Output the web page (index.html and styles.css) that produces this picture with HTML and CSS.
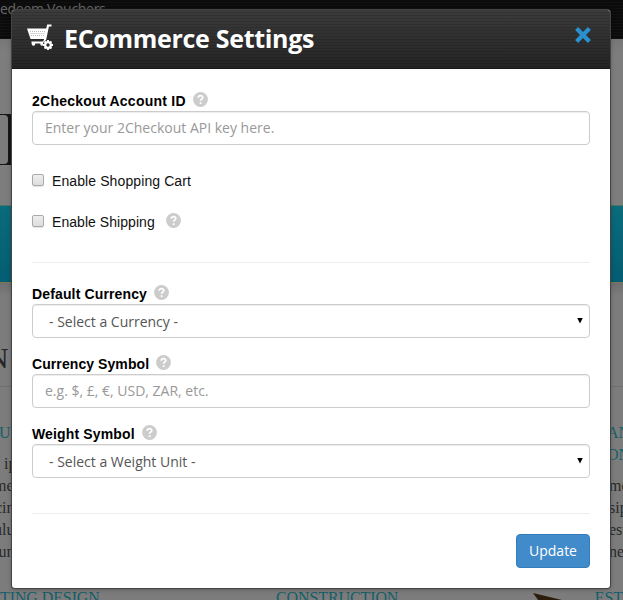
FILE: index.html
```html
<!DOCTYPE html>
<html lang="en">
<head>
<meta charset="utf-8">
<title>ECommerce Settings</title>
<link rel="stylesheet" href="styles.css">
</head>
<body>
<svg class="defs" aria-hidden="true"><symbol id="help" viewBox="0 0 15 15"><circle cx="7.5" cy="7.5" r="7.4" fill="#ccc"/><path d="M5.2 5.8C5.2 2.8 9.9 3 9.7 5.7C9.6 7.1 7.6 7.2 7.6 8.7M7.6 10.2V12" fill="none" stroke="#fff" stroke-width="1.8"/></symbol></svg>
<div class="page">
  <div class="topbar">edeem Vouchers</div>
  <div class="hero"><div class="logo"><div class="logo-inner"></div></div></div>
  <div class="banner"></div>
  <div class="shade"></div>
  <div class="heading">N</div>
  <div class="columns">
    <div class="side left">
      <h3>U</h3>
      <p class="lines"><span>&nbsp;ip</span><span>me</span><span>cin</span><span>ulu</span><span>lun</span></p>
    </div>
    <div class="side right">
      <h3>AN<br>ON</h3>
      <p class="lines"><span>me</span><span>sip</span><span>est</span><span>ne</span></p>
    </div>
  </div>
  <div class="titles">
    <span>TING DESIGN</span><span>CONSTRUCTION</span>
    <svg width="30" height="12" viewBox="0 0 30 12"><path d="M0 1L29 8L24 12H8Z" fill="#2c1d0c"/></svg>
    <span>EST</span>
  </div>
</div>
<div class="modal" role="dialog">
  <header class="modal-header">
    <svg class="cart" width="27" height="27" viewBox="0 0 27 27" fill="none" stroke="#fff">
      <path d="M0 4.5H21L18.5 15H3.5Z" fill="#fff" stroke="none"/>
      <path d="M3 7.5H18M3.5 9.5H18M4 11.5H17" stroke="#888" stroke-width=".6" stroke-dasharray="1 1"/>
      <path d="M24.5 1.5H21L18 16L17 18.5H4.5" stroke-width="2.2"/>
      <circle cx="6.5" cy="20" r="1.8" fill="#fff" stroke="none"/><circle cx="15" cy="20" r="1.8" fill="#fff" stroke="none"/>
      <circle cx="21" cy="21" r="5.2" fill="#2c2c2c" stroke="none"/>
      <circle cx="21" cy="21" r="2.8" stroke-width="2.2"/>
      <path d="M21 16V18M21 24V26M16 21H18M24 21H26M17.5 17.5L18.9 18.9M23.1 23.1L24.5 24.5M24.5 17.5L23.1 18.9M18.9 23.1L17.5 24.5" stroke-width="1.9"/>
    </svg>
    <h1>ECommerce Settings</h1>
    <svg class="close" width="16" height="16" viewBox="0 0 16 16"><path d="M1.6 1.6L14.4 14.4M14.4 1.6L1.6 14.4" stroke="#2a91d0" stroke-width="4.2"/></svg>
  </header>
  <form class="modal-body">
    <div class="field">
      <div class="label"><span class="l1">2Checkout Account ID</span><svg><use href="#help"/></svg></div>
      <input class="control" type="text" placeholder="Enter your 2Checkout API key here.">
    </div>
    <label class="check first"><i class="box"></i><span>Enable Shopping Cart</span></label>
    <label class="check second"><i class="box"></i><span>Enable Shipping</span><svg><use href="#help"/></svg></label>
    <hr>
    <div class="field">
      <div class="label"><span class="l2">Default Currency</span><svg><use href="#help"/></svg></div>
      <div class="control select"><span>- Select a Currency -</span><i class="arrow"></i></div>
    </div>
    <div class="field">
      <div class="label"><span class="l3">Currency Symbol</span><svg><use href="#help"/></svg></div>
      <input class="control" type="text" placeholder="e.g. $, £, €, USD, ZAR, etc.">
    </div>
    <div class="field">
      <div class="label"><span class="l4">Weight Symbol</span><svg><use href="#help"/></svg></div>
      <div class="control select"><span>- Select a Weight Unit -</span><i class="arrow"></i></div>
    </div>
    <hr class="end">
    <footer><button type="button">Update</button></footer>
  </form>
</div>
</body>
</html>
```
FILE: styles.css
```css
* { box-sizing: border-box; }
body { margin: 0; width: 623px; height: 600px; overflow: hidden; position: relative; font-family: "Open Sans", sans-serif; }
h1, h3, p { margin: 0; font-weight: normal; }
.defs { display: none; }

/* dimmed page behind the dialog */
.page { height: 600px; overflow: hidden; background: #7c7c7c; font-family: "Liberation Serif", serif; }
.topbar { height: 39px; background: repeating-linear-gradient(#0b0b0b 0 2px, #111 2px 3px); color: #666; font: 14px/18px "Open Sans", sans-serif; letter-spacing: -.3px; }
.hero { height: 166px; padding-top: 75px; background: linear-gradient(#777, #7d7d7d 12px); }
.logo { width: 12px; height: 51px; padding-top: 1px; background: #171717; }
.logo-inner { width: 8px; height: 49px; border-radius: 0 4px 4px 0; background: #7c7c7c; }
.banner { height: 78px; background: linear-gradient(#0a6b7b, #045d72); border-top: 1px solid #4b7767; border-bottom: 1px solid #777a50; }
.shade { height: 13px; background: linear-gradient(#6f6f6f, #7c7c7c); }
.heading { height: 91px; padding-top: 44px; border-bottom: 1px solid #707070; color: #262626; font-size: 30px; line-height: 36px; text-indent: -13px; }
.columns { display: flex; justify-content: space-between; height: 201px; padding-top: 35px; }
.side { width: 13px; white-space: nowrap; color: #292929; }
.side h3 { color: #145f6a; font-size: 16px; line-height: 22px; }
.left h3 { text-indent: -1px; }
.lines span { display: block; font-size: 16px; line-height: 22px; }
.left .lines { padding-top: 9px; }
.left .lines span:nth-child(2) { margin-left: -6px; }
.left .lines span:nth-child(3) { margin-left: -5px; }
.left .lines span:nth-child(4) { margin-left: -6px; }
.left .lines span:nth-child(5) { margin-left: -6px; }
.right { width: 14px; }
.right h3 { margin-left: -2px; }
.right .lines { padding-top: 9px; }
.titles { display: flex; height: 20px; color: #145f6a; font-size: 16px; line-height: 20px; letter-spacing: -.1px; white-space: nowrap; }
.titles span:nth-child(1) { width: 277px; }
.titles span:nth-child(2) { width: 258px; }
.titles svg { margin: 4px 32px 0 0; }

.modal { position: absolute; left: 12px; top: 10px; width: 598px; height: 578px; background: #fff; border-radius: 3px; overflow: hidden; box-shadow: 0 0 0 1px #444, 0 1px 5px rgba(0,0,0,.35); }
.modal-header { display: flex; height: 59px; padding: 14px 19px 0 15px; background: repeating-linear-gradient(transparent 0 2px, rgba(0,0,0,.12) 2px 3px), linear-gradient(#3b3b3b, #242424); border-bottom: 1px solid #191919; }
.modal-header h1 { margin: -6px 0 0 10px; color: #fff; font-size: 25px; font-weight: bold; line-height: 40px; letter-spacing: -.3px; white-space: nowrap; }
.close { margin: 3px 0 0 auto; }
.modal-body { padding: 23px 20px 0; }
.field { height: 70px; }
.label { display: flex; height: 19px; color: #000; font: bold 14px/18px "Liberation Sans", sans-serif; white-space: nowrap; }
.label svg { width: 15px; height: 15px; margin-left: 7px; }
.l1 { letter-spacing: .25px; }
.l2 { letter-spacing: .14px; }
.l3 { letter-spacing: .08px; }
.l4 { letter-spacing: .15px; }
.control { display: block; width: 558px; height: 34px; padding: 0 12px 1px; border: 1px solid #ccc; border-radius: 4px; background: #fff; box-shadow: inset 0 1px 1px rgba(0,0,0,.075); font: 14px/30px "Open Sans", sans-serif; color: #555; }
.control::placeholder { color: #999; opacity: 1; }
.select { display: flex; justify-content: space-between; align-items: center; padding: 2px 6px 0 16px; }
.arrow { width: 6px; height: 6px; margin-top: -3px; background: #000; clip-path: polygon(0 0, 100% 0, 50% 100%); }
.check { display: flex; align-items: flex-start; height: 41px; color: #111; font: 14px/16px "Liberation Sans", sans-serif; white-space: nowrap; }
.check.first { margin-top: 11px; }
.check span { margin-left: 8px; letter-spacing: .1px; }
.check.second span { letter-spacing: .05px; }
.check svg { width: 15px; height: 15px; margin: -1px 0 0 11px; }
.box { width: 12px; height: 12px; margin-top: 1px; border: 1px solid #aaa; border-radius: 2px; background: linear-gradient(#eee, #ddd); box-shadow: 0 1px 1px #e4e4e4; }
hr { height: 1px; margin: 7px 0 22px; border: 0; background: #eee; }
hr.end { margin: 18px 0 20px; }
footer { display: flex; justify-content: flex-end; }
button { width: 74px; height: 34px; padding: 0; border: 1px solid #357ebd; border-radius: 4px; background: #428bca; color: #fff; font: 14px/20px "Open Sans", sans-serif; }
```
